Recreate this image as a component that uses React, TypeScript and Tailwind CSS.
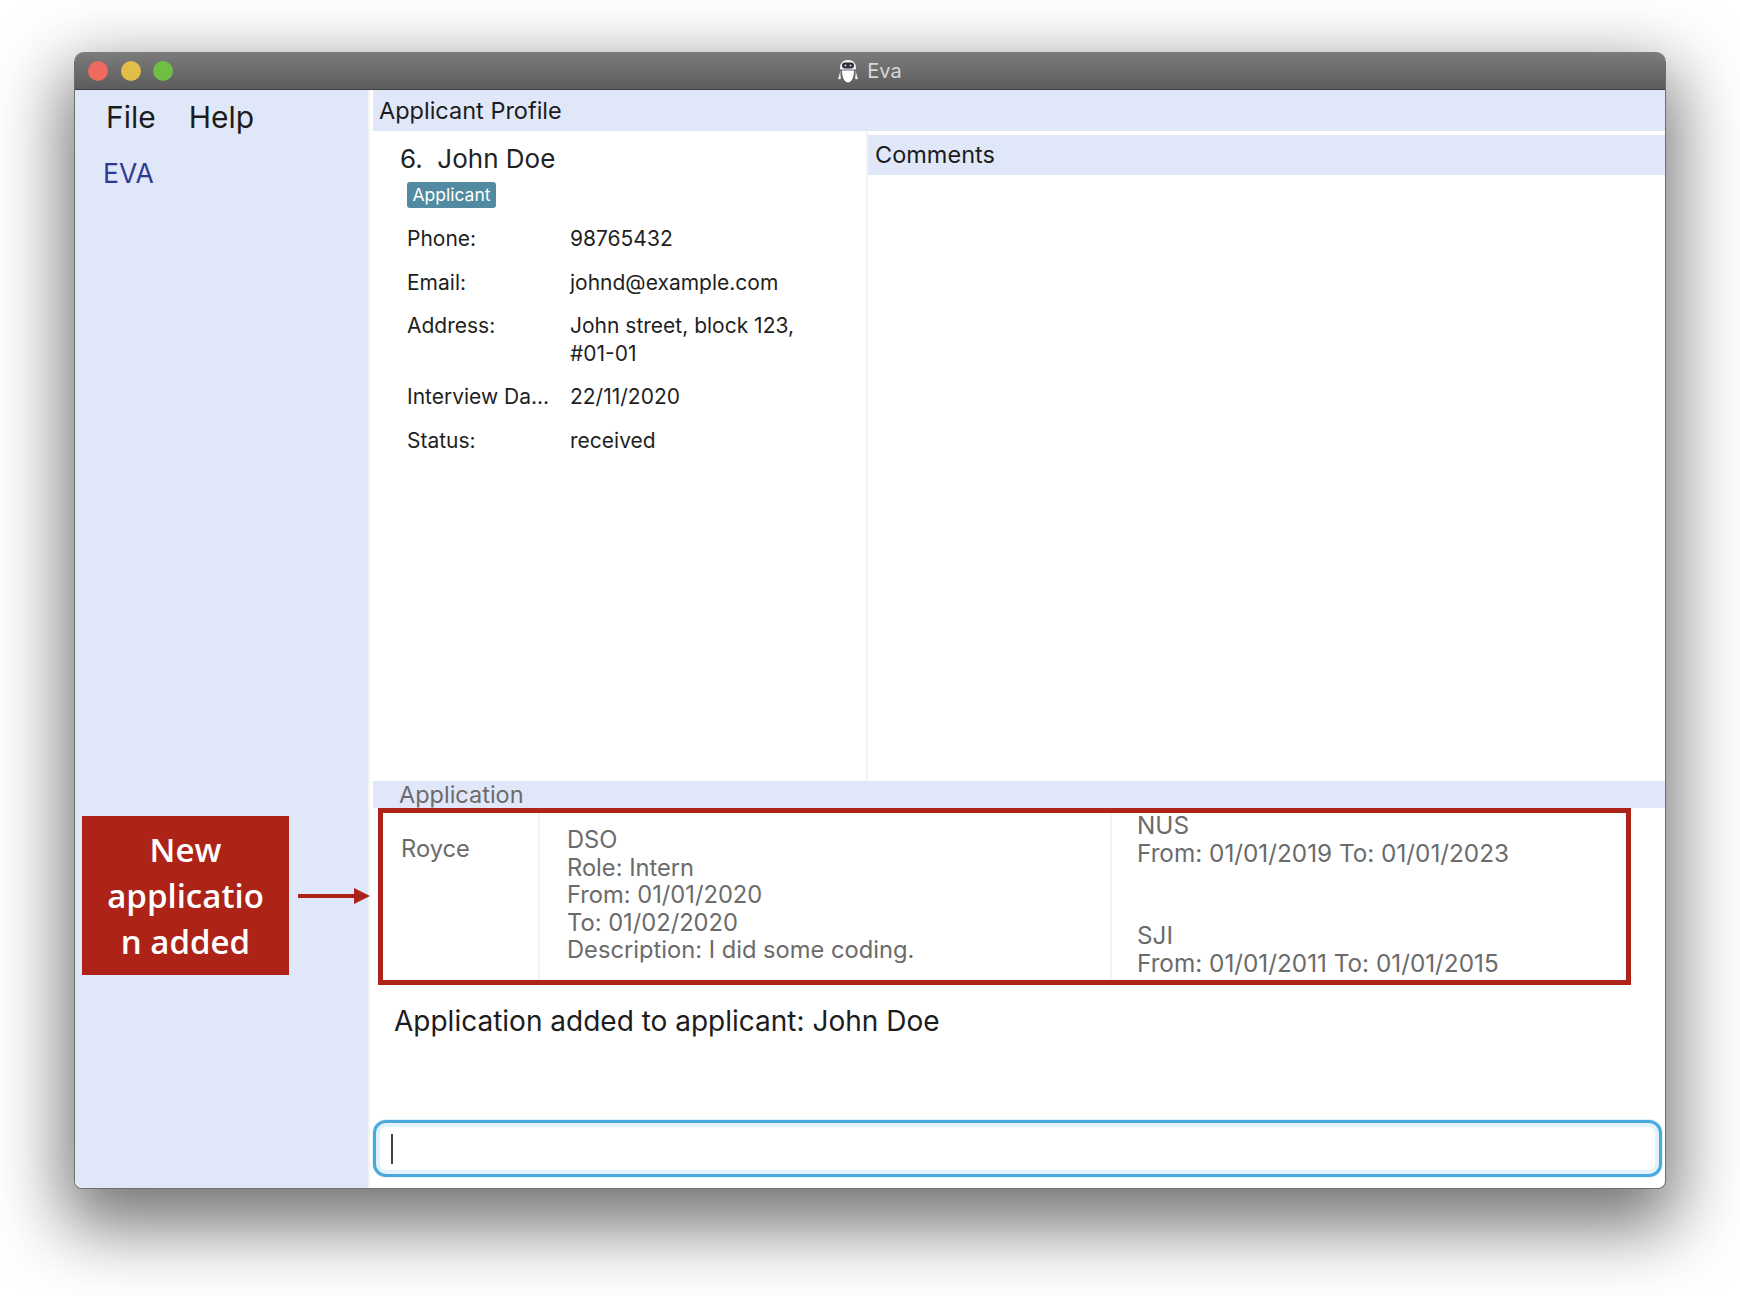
const sans = "font-['Inter',Arial,sans-serif]";

function EvaIcon() {
  return (
    <svg width="22" height="25" viewBox="0 0 22 25">
      <path d="M3 9C3 3.500 6.500 1 11 1s8 2.500 8 8c0 1-.5 1.500-1.500 1.500h-13C3.500 10.500 3 10 3 9z" fill="#f2f2f2" />
      <rect x="5" y="3.500" width="12" height="6" rx="3" fill="#2c2f3a" />
      <circle cx="8.500" cy="6.500" r="1" fill="#cfd8e6" />
      <circle cx="13.500" cy="6.500" r="1" fill="#cfd8e6" />
      <path d="M5 11.500h12c0 7-2.500 12-6 12s-6-5-6-12z" fill="#ffffff" />
      <path d="M3.500 11.500L1 20c1 .5 2 .5 3-.5-.5-2.500-.7-5-.5-8z" fill="#e8e8e8" />
      <path d="M18.500 11.500L21 20c-1 .5-2 .5-3-.5.500-2.500.7-5 .5-8z" fill="#e8e8e8" />
    </svg>
  );
}

function TitleBar() {
  return (
    <div className="h-[38px] shrink-0 grid grid-cols-[1fr_auto_1fr] items-center bg-gradient-to-b from-[#7c7c7c] to-[#5c5c5c] border-b border-[#3f3f3f] rounded-t-[9px] pl-[13px]">
      <div className="flex gap-[12.500px]">
        <span className="w-5 h-5 rounded-full bg-[#ee6a5f]" />
        <span className="w-5 h-5 rounded-full bg-[#e2bd48]" />
        <span className="w-5 h-5 rounded-full bg-[#6fbf44]" />
      </div>
      <div className="flex items-center gap-[8px] text-[20px] text-[#d8d8d8] -ml-[14px] pt-[1px]">
        <EvaIcon />
        <span>Eva</span>
      </div>
      <div />
    </div>
  );
}

function Row({ label, children }: { label: string; children: React.ReactNode }) {
  return (
    <div className="flex mb-[16px] text-[21px] leading-[27.500px] text-[#1f1f1f]">
      <div className="w-[163px] shrink-0">{label}</div>
      <div className="w-[240px]">{children}</div>
    </div>
  );
}

function Profile() {
  return (
    <div className="w-[495px] shrink-0 border-r-2 border-[#f3f3f1] pl-[27px] pt-[11px]">
      <div className="text-[26px] leading-[34px] text-[#222] whitespace-pre">6.  John Doe</div>
      <div className="ml-[7px] mt-[6px] w-[89px] h-[26px] rounded-[3px] bg-[#528aa2] text-white text-[17.500px] leading-[26px] text-center">
        Applicant
      </div>
      <div className="ml-[7px] mt-[17px]">
        <Row label="Phone:">98765432</Row>
        <Row label="Email:">johnd@example.com</Row>
        <Row label="Address:">John street, block 123, #01-01</Row>
        <Row label="Interview Da...">22/11/2020</Row>
        <Row label="Status:">received</Row>
      </div>
    </div>
  );
}

function ApplicationRow() {
  return (
    <div className="ml-[5px] w-[1253px] h-[177px] border-[5px] border-[#ae2317] flex text-[#6b6b6b] text-[23.700px] leading-[27.500px] overflow-hidden">
      <div className="w-[157px] shrink-0 border-r-2 border-[#f3f3f1] pl-[18px] pt-[22px]">Royce</div>
      <div className="w-[572px] shrink-0 border-r-2 border-[#f3f3f1] pl-[27px] pt-[13px]">
        <div>DSO</div>
        <div>Role: Intern</div>
        <div>From: 01/01/2020</div>
        <div>To: 01/02/2020</div>
        <div>Description: I did some coding.</div>
      </div>
      <div className="pl-[25px] flex flex-col justify-between pb-[3px] -mt-[1px] text-[24.300px]">
        <div>
          <div>NUS</div>
          <div>From: 01/01/2019 To: 01/01/2023</div>
        </div>
        <div>
          <div>SJI</div>
          <div>From: 01/01/2011 To: 01/01/2015</div>
        </div>
      </div>
    </div>
  );
}

export default function App() {
  return (
    <div className={`w-[1740px] h-[1296px] bg-white pl-[74px] pt-[52px] overflow-hidden ${sans}`}>
      <div className="relative w-[1592px] h-[1137px] flex flex-col bg-white border-x border-b border-[#6e6e6e] rounded-t-[10px] rounded-b-[8px] shadow-[0_28px_70px_10px_rgba(0,0,0,0.55)]">
        <TitleBar />
        <div className="flex-1 flex min-h-0">
          <div className="w-[293px] shrink-0 bg-[#e0e7f8] rounded-bl-[7px]">
            <div className="flex gap-[33px] pl-[31px] pt-[10px] text-[30px] leading-[34px] text-[#1c1c1c]">
              <span>File</span>
              <span>Help</span>
            </div>
            <div className="pl-[28px] pt-[23px] text-[26.500px] leading-[32px] text-[#2f3a94]">EVA</div>
          </div>
          <div className="flex-1 min-w-0 flex flex-col pl-[3px] border-l-2 border-[#f3f3f1]">
            <div className="h-[41px] shrink-0 bg-[#e0e7f8] pl-[6px] text-[23.500px] leading-[41px] text-[#1c1c1c]">Applicant Profile</div>
            <div className="h-[650px] shrink-0 flex">
              <Profile />
              <div className="flex-1 pt-[4px]">
                <div className="h-[40px] bg-[#e0e7f8] pl-[7px] text-[23.500px] leading-[40px] text-[#1c1c1c]">Comments</div>
              </div>
            </div>
            <div className="h-[27px] shrink-0 bg-[#e0e7f8] pl-[26px] text-[23.500px] leading-[27px] text-[#6b6b6b]">Application</div>
            <ApplicationRow />
            <div className="pl-[21px] pt-[19px] h-[135px] shrink-0 text-[28px] leading-[34px] text-[#1c1c1c]">
              Application added to applicant: John Doe
            </div>
            <div className="h-[57px] w-[1289px] shrink-0 rounded-[13px] border-[3px] border-[#4aa8dc] flex items-center bg-white shadow-[inset_0_0_0_4px_#e2f2fb,0_0_0_1px_#e2f2fb] pl-[15px]">
              <div className="w-[2px] h-[30px] bg-[#444]" />
            </div>
          </div>
        </div>

        <div className="absolute left-[7px] top-[764px] w-[207px] h-[159px] bg-[#ae2317] text-white font-['Open_Sans',sans-serif] font-semibold text-[33px] leading-[46px] text-center pt-[11px]">
          <div>New</div>
          <div>applicatio</div>
          <div>n added</div>
        </div>
        <svg className="absolute left-[223px] top-[835px]" width="72" height="18" viewBox="0 0 72 18">
          <rect x="0" y="7" width="58" height="4" fill="#ae2317" />
          <path d="M56 1L72 9L56 17z" fill="#ae2317" />
        </svg>
      </div>
    </div>
  );
}
